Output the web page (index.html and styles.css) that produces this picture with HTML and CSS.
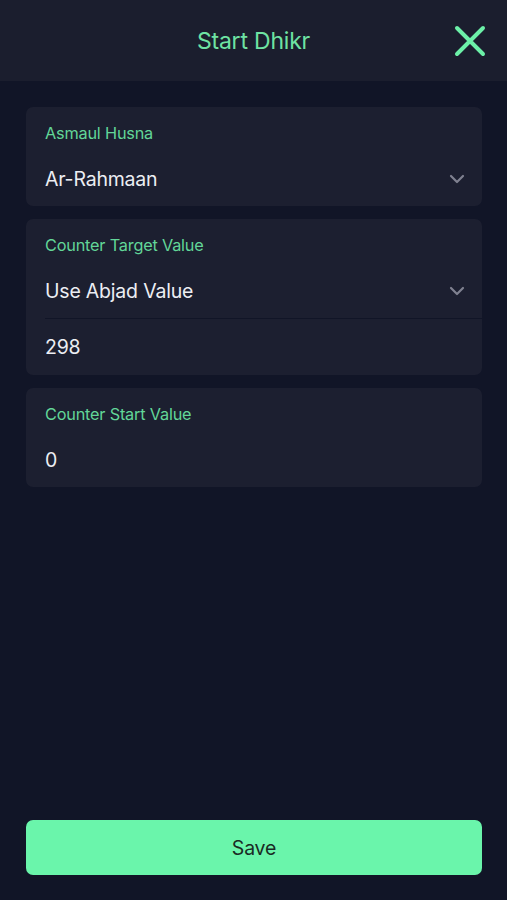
FILE: index.html
```html
<!DOCTYPE html>
<html lang="en">
<head>
  <meta charset="UTF-8" />
  <meta name="viewport" content="width=device-width, initial-scale=1.0"/>
  <title>Start Dhikr</title>
  <link rel="stylesheet" href="styles.css">
</head>
<body>
  <div class="screen">
    <header class="topbar">
      <h1 class="title">Start Dhikr</h1>
      <button class="close" aria-label="Close">
        <svg width="32" height="32" viewBox="0 0 32 32">
          <path d="M3 3 L29 29 M29 3 L3 29" stroke="#6cf0a8" stroke-width="4" stroke-linecap="round" fill="none"/>
        </svg>
      </button>
    </header>

    <main class="form">
      <div class="card">
        <div class="label">Asmaul Husna</div>
        <div class="row select">
          <span>Ar-Rahmaan</span>
          <svg class="chevron" width="16" height="10" viewBox="0 0 16 10">
            <path d="M2 2 L8 8 L14 2" stroke="#7f8190" stroke-width="2.2" stroke-linecap="round" stroke-linejoin="round" fill="none"/>
          </svg>
        </div>
      </div>

      <div class="card">
        <div class="label">Counter Target Value</div>
        <div class="row select divided">
          <span>Use Abjad Value</span>
          <svg class="chevron" width="16" height="10" viewBox="0 0 16 10">
            <path d="M2 2 L8 8 L14 2" stroke="#7f8190" stroke-width="2.2" stroke-linecap="round" stroke-linejoin="round" fill="none"/>
          </svg>
        </div>
        <div class="row value">298</div>
      </div>

      <div class="card">
        <div class="label">Counter Start Value</div>
        <div class="row">0</div>
      </div>
    </main>

    <footer class="footer">
      <button class="save">Save</button>
    </footer>
  </div>
</body>
</html>
```

FILE: styles.css
```css
body {
  margin: 0;
  background-color: #111527;
  font-family: 'Inter', 'Roboto', sans-serif;
  color: #eceef3;
}

.screen {
  display: flex;
  flex-direction: column;
  height: 100vh;
}

.topbar {
  height: 81px;
  background-color: #1b1e2e;
  display: flex;
  align-items: center;
  justify-content: center;
  position: relative;
}

.title {
  margin: 0;
  font-size: 23px;
  font-weight: 400;
  color: #6ee3a3;
  letter-spacing: -0.2px;
}

.close {
  position: absolute;
  right: 21px;
  top: 25px;
  padding: 0;
  border: none;
  background: none;
  cursor: pointer;
  display: flex;
}

.form {
  flex: 1;
  padding: 26px 25px 0 26px;
  display: flex;
  flex-direction: column;
  gap: 13px;
}

.card {
  background-color: #1c1f30;
  border-radius: 7px;
  padding-top: 15px;
  padding-left: 19px;
}

.label {
  font-size: 16.3px;
  line-height: 22px;
  color: #62d698;
  letter-spacing: -0.2px;
  margin-bottom: 8px;
}

.row {
  height: 54px;
  display: flex;
  align-items: center;
  font-size: 19.5px;
  letter-spacing: -0.2px;
  color: #eceef3;
}

.select {
  justify-content: space-between;
  padding-right: 17px;
}

.divided {
  border-bottom: 1px solid #111527;
}

.value {
  height: 56px;
}

.footer {
  padding: 0 25px 25px 26px;
}

.save {
  width: 100%;
  height: 55px;
  border: none;
  border-radius: 7px;
  background-color: #6af5ab;
  color: #1a2b24;
  font-family: 'Inter', 'Roboto', sans-serif;
  font-size: 19.5px;
  letter-spacing: -0.2px;
  cursor: pointer;
}
```
